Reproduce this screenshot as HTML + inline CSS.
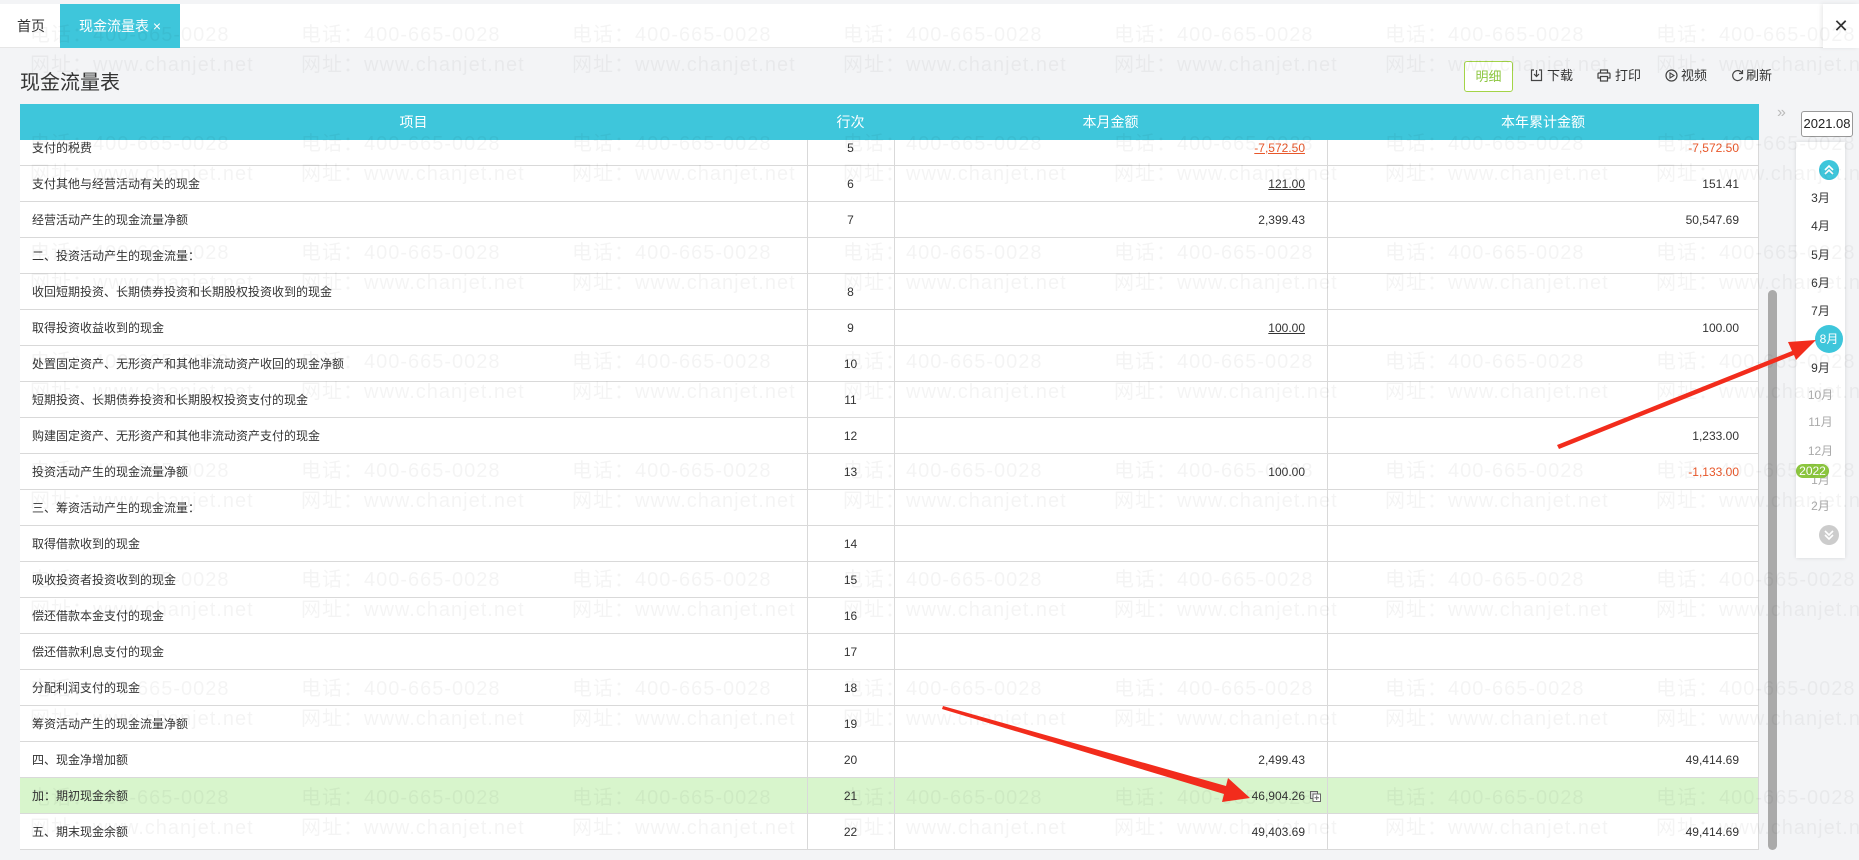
<!DOCTYPE html>
<html><head><meta charset="utf-8"><style>
*{margin:0;padding:0;box-sizing:border-box}
body{width:1859px;height:860px;overflow:hidden;background:#f3f4f6;font-family:"Liberation Sans","Noto Sans CJK SC",sans-serif;color:#333;position:relative}
.abs{position:absolute}
.topbar{left:0;top:4px;width:1859px;height:44px;background:#fff;border-bottom:1px solid #e6e6e6}
.tab{top:4px;left:60px;width:120px;height:44px;background:#3ec6db;color:#fff;font-size:14px;line-height:44px;text-align:center}
.home{left:17px;top:4px;line-height:44px;font-size:14px;color:#333}
.closeblk{left:1823px;top:4px;width:36px;height:44px;background:#fff;box-shadow:-2px 0 4px rgba(0,0,0,.08);font-size:18px;line-height:44px;text-align:center;color:#333}
.title{left:20px;top:66px;font-size:20px;color:#333}
.btn{top:61px;left:1464px;width:49px;height:31px;border:1px solid #a3d447;border-radius:3px;color:#8cc63f;font-size:13px;line-height:29px;text-align:center;background:#fff}
.tool{top:68px;font-size:13px;color:#333;line-height:16px}
.head{left:20px;top:104px;width:1739px;height:36px;background:#3ec6db;color:#fff;font-size:14px;line-height:36px;z-index:3}
.head div{position:absolute;top:0;text-align:center}
.body{left:20px;top:140px;width:1739px;height:710px;background:#fff;overflow:hidden}
.row{position:absolute;left:0;width:1739px;height:36px;font-size:12px;line-height:36px;border-bottom:1px solid #d9d9d9}
.row .n{position:absolute;left:12px}
.row .c{position:absolute;left:787px;width:87px;text-align:center}
.row .m{position:absolute;right:454px;text-align:right}
.row .y{position:absolute;right:20px;text-align:right}
.red{color:#e8572a}
.u{text-decoration:underline}
.vl{position:absolute;top:0;width:1px;height:720px;background:#d9d9d9}
.wm{position:absolute;z-index:5;font-size:20px;letter-spacing:1px;color:rgba(0,0,0,.045);white-space:nowrap;pointer-events:none}
.side{left:1796px;top:142px;width:49px;height:416px;background:#fff;box-shadow:0 0 4px rgba(0,0,0,.12)}
.mo{position:absolute;left:1796px;width:49px;text-align:center;font-size:12px;color:#333;line-height:16px}
.grey{color:#aaa}
</style></head><body>
<div class="abs topbar"></div>
<div class="abs home">首页</div>
<div class="abs tab">现金流量表 ×</div>
<div class="abs closeblk">✕</div>
<div class="abs title">现金流量表</div>
<div class="abs btn">明细</div>
<svg class="abs" style="left:1530px;top:69px" width="13" height="13" viewBox="0 0 13 13"><path d="M4 1H1.5v10.5h10V1H9M6.5 1v6M4 5l2.5 2.5L9 5" fill="none" stroke="#444" stroke-width="1.2"/></svg>
<div class="abs tool" style="left:1547px">下载</div>
<svg class="abs" style="left:1597px;top:69px" width="14" height="13" viewBox="0 0 14 13"><path d="M3.5 4V1h7v3M2 4h10a1 1 0 0 1 1 1v4h-2.5M3.5 9H1V5a1 1 0 0 1 1-1M3.5 7.5h7V12h-7z" fill="none" stroke="#444" stroke-width="1.2"/></svg>
<div class="abs tool" style="left:1615px">打印</div>
<svg class="abs" style="left:1665px;top:69px" width="13" height="13" viewBox="0 0 13 13"><circle cx="6.5" cy="6.5" r="5.5" fill="none" stroke="#444" stroke-width="1.2"/><path d="M5 4v5l4-2.5z" fill="none" stroke="#444" stroke-width="1.1"/></svg>
<div class="abs tool" style="left:1681px">视频</div>
<svg class="abs" style="left:1731px;top:69px" width="13" height="13" viewBox="0 0 13 13"><path d="M11 4A5 5 0 1 0 11.5 8" fill="none" stroke="#444" stroke-width="1.2"/><path d="M11.5 1v3.5H8" fill="none" stroke="#444" stroke-width="1.2"/></svg>
<div class="abs tool" style="left:1746px">刷新</div>

<div class="abs head">
<div style="left:0;width:787px">项目</div>
<div style="left:787px;width:87px">行次</div>
<div style="left:874px;width:433px">本月金额</div>
<div style="left:1307px;width:432px">本年累计金额</div>
</div>
<div class="abs body">
<div style="position:absolute;left:0;top:-10px;width:1739px">
<div class="row" style="top:0"><span class="n">支付的税费</span><span class="c">5</span><span class="m red u">-7,572.50</span><span class="y red">-7,572.50</span></div>
<div class="row" style="top:36px"><span class="n">支付其他与经营活动有关的现金</span><span class="c">6</span><span class="m u">121.00</span><span class="y">151.41</span></div>
<div class="row" style="top:72px"><span class="n">经营活动产生的现金流量净额</span><span class="c">7</span><span class="m">2,399.43</span><span class="y">50,547.69</span></div>
<div class="row" style="top:108px"><span class="n">二、投资活动产生的现金流量：</span></div>
<div class="row" style="top:144px"><span class="n">收回短期投资、长期债券投资和长期股权投资收到的现金</span><span class="c">8</span></div>
<div class="row" style="top:180px"><span class="n">取得投资收益收到的现金</span><span class="c">9</span><span class="m u">100.00</span><span class="y">100.00</span></div>
<div class="row" style="top:216px"><span class="n">处置固定资产、无形资产和其他非流动资产收回的现金净额</span><span class="c">10</span></div>
<div class="row" style="top:252px"><span class="n">短期投资、长期债券投资和长期股权投资支付的现金</span><span class="c">11</span></div>
<div class="row" style="top:288px"><span class="n">购建固定资产、无形资产和其他非流动资产支付的现金</span><span class="c">12</span><span class="y">1,233.00</span></div>
<div class="row" style="top:324px"><span class="n">投资活动产生的现金流量净额</span><span class="c">13</span><span class="m">100.00</span><span class="y red">-1,133.00</span></div>
<div class="row" style="top:360px"><span class="n">三、筹资活动产生的现金流量：</span></div>
<div class="row" style="top:396px"><span class="n">取得借款收到的现金</span><span class="c">14</span></div>
<div class="row" style="top:432px"><span class="n">吸收投资者投资收到的现金</span><span class="c">15</span></div>
<div class="row" style="top:468px"><span class="n">偿还借款本金支付的现金</span><span class="c">16</span></div>
<div class="row" style="top:504px"><span class="n">偿还借款利息支付的现金</span><span class="c">17</span></div>
<div class="row" style="top:540px"><span class="n">分配利润支付的现金</span><span class="c">18</span></div>
<div class="row" style="top:576px"><span class="n">筹资活动产生的现金流量净额</span><span class="c">19</span></div>
<div class="row" style="top:612px"><span class="n">四、现金净增加额</span><span class="c">20</span><span class="m">2,499.43</span><span class="y">49,414.69</span></div>
<div class="row" style="top:648px;background:#d8f5cc"><span class="n">加：期初现金余额</span><span class="c">21</span><span class="m">46,904.26</span><span class="y"></span></div>
<div class="row" style="top:684px"><span class="n">五、期末现金余额</span><span class="c">22</span><span class="m">49,403.69</span><span class="y">49,414.69</span></div>
<div class="vl" style="left:787px"></div><div class="vl" style="left:874px"></div><div class="vl" style="left:1307px"></div><div class="vl" style="left:1738px"></div>
</div>
</div>
<svg class="abs" style="left:1310px;top:791px" width="11" height="11" viewBox="0 0 11 11"><rect x="0.5" y="0.5" width="7" height="7" fill="#ddd" stroke="#666"/><rect x="3" y="3" width="7.5" height="7.5" fill="#fff" stroke="#666"/><path d="M6.7 4.5v4.5M4.5 6.7h4.5" stroke="#666"/></svg>
<div class="abs" style="left:1768px;top:290px;width:9px;height:560px;background:#aaa;border-radius:5px"></div>
<div class="abs" style="left:1777px;top:104px;font-size:16px;color:#bbb">»</div>
<div class="abs side"></div>
<div class="abs" style="left:1801px;top:111px;width:52px;height:26px;border:1px solid #999;border-radius:3px;background:#fff;font-size:13px;line-height:24px;text-align:center;color:#222">2021.08</div>
<svg class="abs" style="left:1819px;top:160px" width="20" height="20" viewBox="0 0 20 20"><circle cx="10" cy="10" r="10" fill="#3ec6db"/><path d="M6 10l4-4 4 4M6 14l4-4 4 4" fill="none" stroke="#fff" stroke-width="1.6"/></svg>
<div class="mo" style="top:190px">3月</div>
<div class="mo" style="top:218px">4月</div>
<div class="mo" style="top:247px">5月</div>
<div class="mo" style="top:275px">6月</div>
<div class="mo" style="top:303px">7月</div>
<div class="abs" style="left:1815px;top:325px;width:28px;height:28px;border-radius:50%;background:#3ec6db;color:#fff;font-size:12px;line-height:28px;text-align:center">8月</div>
<div class="mo" style="top:360px">9月</div>
<div class="mo grey" style="top:387px">10月</div>
<div class="mo grey" style="top:414px">11月</div>
<div class="mo grey" style="top:443px">12月</div>
<div class="mo grey" style="top:472px">1月</div>
<div class="abs" style="left:1796px;top:464px;width:33px;height:14px;border-radius:7px;background:#8cc63f;color:#fff;font-size:12px;line-height:14px;text-align:center">2022</div>
<div class="mo grey" style="top:498px">2月</div>
<svg class="abs" style="left:1819px;top:525px" width="20" height="20" viewBox="0 0 20 20"><circle cx="10" cy="10" r="10" fill="#ccc"/><path d="M6 6l4 4 4-4M6 10l4 4 4-4" fill="none" stroke="#fff" stroke-width="1.6"/></svg>

<div id="wm"></div>
<script>
var h='';
for(var r=0;r<8;r++){var y=18+r*109;for(var c=0;c<7;c++){var x=30+c*271;
h+='<div class="wm" style="left:'+x+'px;top:'+y+'px">电话：400-665-0028</div>';
h+='<div class="wm" style="left:'+x+'px;top:'+(y+30)+'px">网址：www.chanjet.net</div>';}}
document.getElementById('wm').innerHTML=h;
</script>
<svg class="abs" style="left:0;top:0;z-index:6" width="1859" height="860">
<polygon points="1557,445 1792,351 1788,342 1816,340 1796,360 1794,355 1559,449" fill="#f22c1c"/>
<polygon points="943,706 1226,786 1228,778 1250,798 1222,802 1224,794 942,709" fill="#f22c1c"/>
</svg>
</body></html>
